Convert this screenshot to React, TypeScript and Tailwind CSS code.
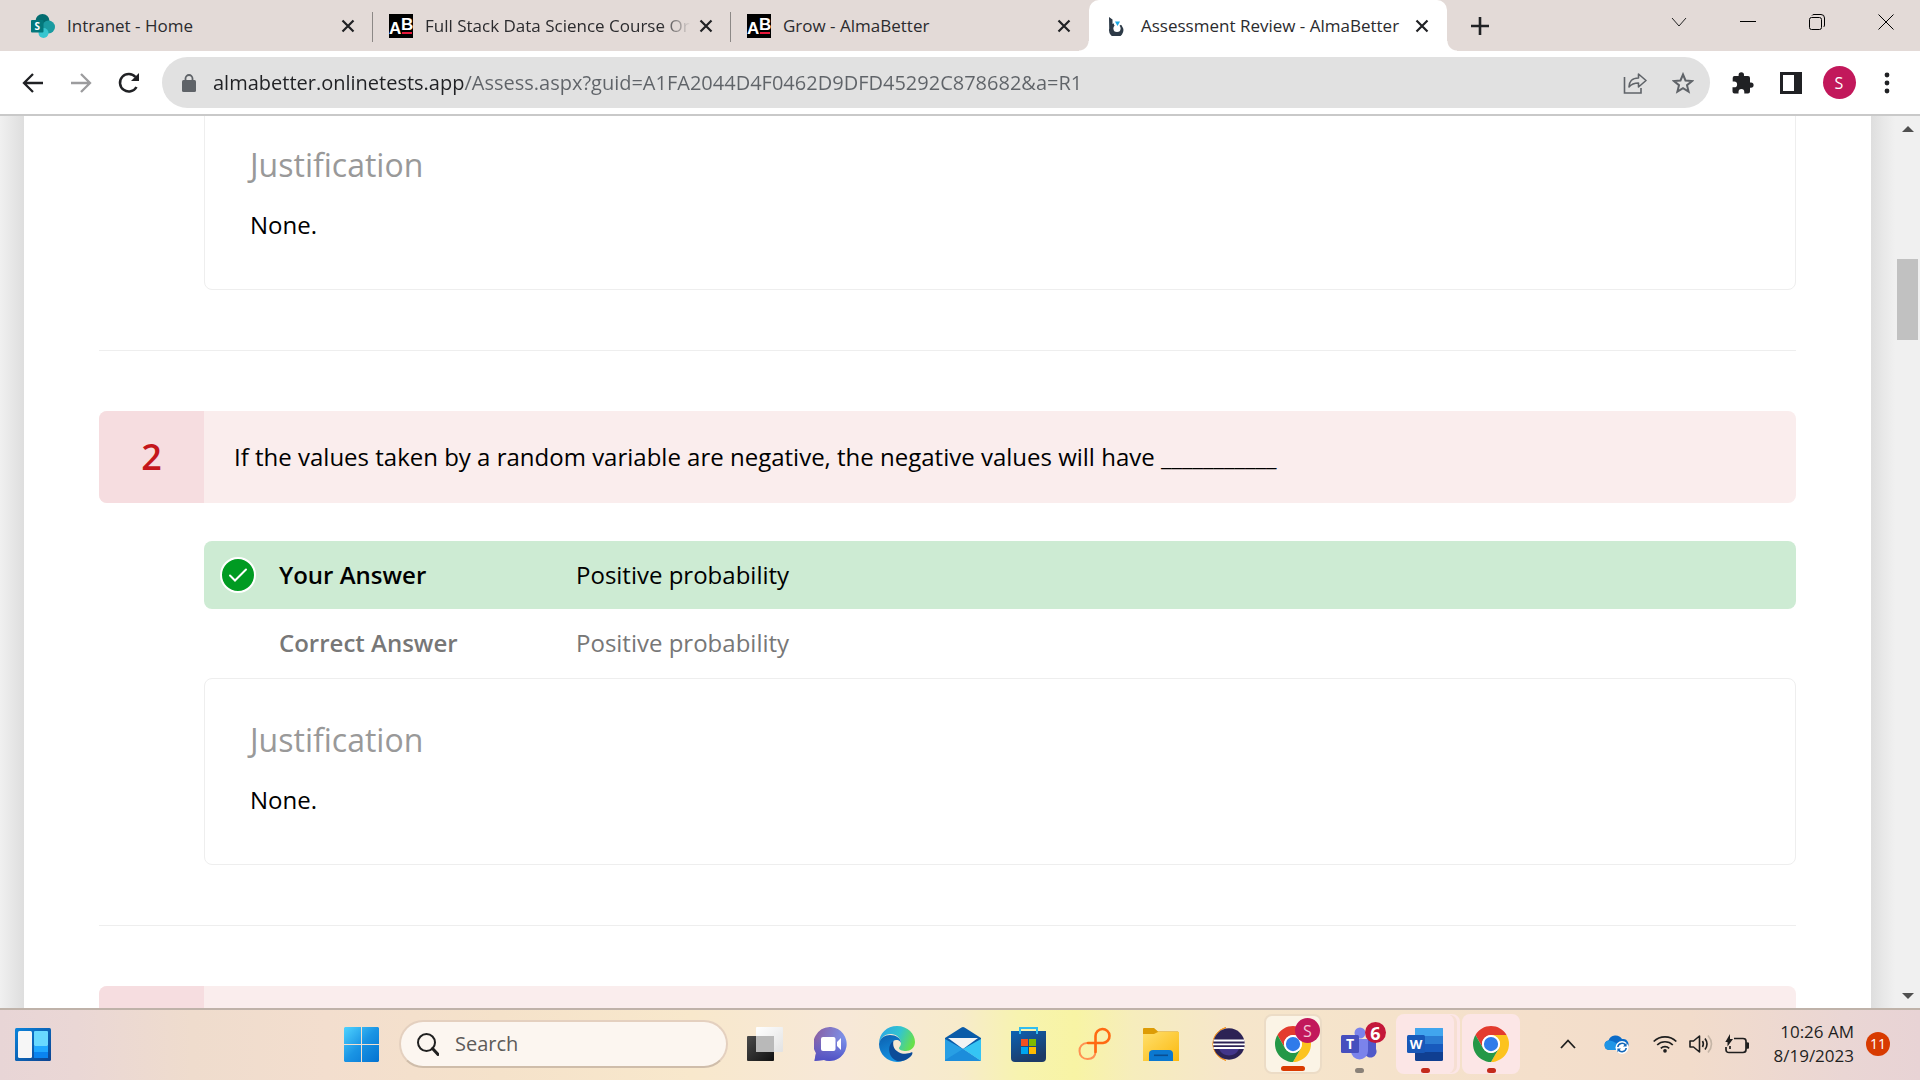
import React from "react";

const UI = "font-['Open_Sans','Noto_Sans',sans-serif]";

/* ---------- Tab icons ---------- */

function SharePointIcon() {
  return (
    <svg width="24" height="24" viewBox="0 0 24 24" aria-hidden="true">
      <circle cx="11.5" cy="7" r="7" fill="#036c70" />
      <circle cx="17.5" cy="13" r="6.5" fill="#1a9ba1" />
      <circle cx="12.5" cy="19" r="5" fill="#37c6d0" />
      <rect x="0" y="6" width="12.5" height="12.5" rx="1" fill="#03787c" />
      <text x="6.2" y="16" fontSize="10" fontWeight="700" fill="#fff" textAnchor="middle" fontFamily="Open Sans">S</text>
    </svg>
  );
}

function AlmaIcon() {
  return (
    <svg width="24" height="24" viewBox="0 0 24 24" aria-hidden="true">
      <rect width="24" height="24" fill="#000" />
      <text x="0" y="20" fontSize="17" fontWeight="700" fill="#fff" fontFamily="Liberation Sans">A</text>
      <text x="12" y="16" fontSize="17" fontWeight="700" fill="#fff" fontFamily="Liberation Sans">B</text>
      <rect x="13" y="18" width="10" height="2" fill="#e8173a" />
    </svg>
  );
}

function AssessIcon() {
  return (
    <svg width="18" height="20" viewBox="0 0 18 20" aria-hidden="true">
      <path d="M1 1 L4.500 3.500 V8 A7.200 7.200 0 1 1 1.200 12.500Z" fill="#2d3a47" />
      <circle cx="9" cy="12.500" r="3.600" fill="#fff" />
      <path d="M6 5 H13 V8.500 L9 12 L6 9Z" fill="#fff" />
      <path d="M7 5.500 H12 L9.500 10Z" fill="#19a9e5" />
    </svg>
  );
}

function CloseGlyph() {
  return (
    <svg width="14" height="14" viewBox="0 0 14 14" aria-hidden="true">
      <path d="M1.500 1.500 L12.500 12.500 M12.500 1.500 L1.500 12.500" stroke="#202124" strokeWidth="2.200" />
    </svg>
  );
}

type TabProps = { icon: React.ReactNode; title: string; active?: boolean; divider?: boolean; fade?: boolean };

function Tab({ icon, title, active, divider, fade }: TabProps) {
  return (
    <div className="relative flex w-[358px] min-w-0 shrink items-center pl-4 pr-[18px]">
      {active && (
        <>
          <span className="absolute inset-0 rounded-t-[10px] bg-white" />
          <span className="absolute -left-[10px] bottom-0 size-[10px] bg-[radial-gradient(circle_at_0_0,#e3dad7_9px,white_10px)]" />
          <span className="absolute -right-[10px] bottom-0 size-[10px] bg-[radial-gradient(circle_at_100%_0,#e3dad7_9px,white_10px)]" />
        </>
      )}
      <button
        role="tab"
        aria-selected={!!active}
        className={`relative flex min-w-0 flex-1 items-center gap-3 overflow-hidden whitespace-nowrap text-left text-[17px] leading-6 text-[#2b2b2e] ${
          fade ? "[mask-image:linear-gradient(to_right,black_90%,transparent_100%)]" : ""
        }`}
      >
        <span className="flex w-6 shrink-0 justify-center">{icon}</span>
        <span>{title}</span>
      </button>
      <button aria-label={`Close ${title}`} className={`relative ${fade ? "ml-2" : "ml-3"}`}>
        <CloseGlyph />
      </button>
      {divider && <span className="absolute right-0 top-3 h-[30px] w-px bg-[#8c8886]" />}
    </div>
  );
}

function TabStrip() {
  return (
    <header className="flex h-[51px] shrink-0 bg-[#e3dad7] pl-[15px]">
      <div role="tablist" className="flex min-w-0">
        <Tab icon={<SharePointIcon />} title="Intranet - Home" divider />
        <Tab icon={<AlmaIcon />} title="Full Stack Data Science Course Or" divider fade />
        <Tab icon={<AlmaIcon />} title="Grow - AlmaBetter" />
        <Tab icon={<AssessIcon />} title="Assessment Review - AlmaBetter" active />
      </div>
      <button aria-label="New tab" className="ml-6">
        <svg width="18" height="18" viewBox="0 0 18 18" aria-hidden="true">
          <path d="M9 0 V18 M0 9 H18" stroke="#202124" strokeWidth="2.600" />
        </svg>
      </button>
      <div className="ml-auto flex h-11">
        <button aria-label="Search tabs" className="flex w-[69px] items-center justify-center">
          <svg width="16" height="10" viewBox="0 0 16 10" aria-hidden="true"><path d="M1 1 L8 9 L15 1" fill="none" stroke="#222" /></svg>
        </button>
        <button aria-label="Minimize" className="flex w-[69px] items-center justify-center">
          <svg width="16" height="2" viewBox="0 0 16 2" aria-hidden="true"><rect width="16" height="1" fill="#000" /></svg>
        </button>
        <button aria-label="Restore" className="flex w-[69px] items-center justify-center">
          <svg width="16" height="16" viewBox="0 0 16 16" fill="none" stroke="#000" aria-hidden="true">
            <rect x=".5" y="3.500" width="12" height="12" rx="2" />
            <path d="M3 1.500 Q3.500 .5 5 .5 H12 Q15.500 .5 15.500 4 V11 Q15.500 12.500 14.500 13" />
          </svg>
        </button>
        <button aria-label="Close window" className="flex w-[69px] items-center justify-center">
          <svg width="16" height="16" viewBox="0 0 16 16" aria-hidden="true"><path d="M.5 .5 L15.500 15.500 M15.500 .5 L.5 15.500" stroke="#000" /></svg>
        </button>
      </div>
    </header>
  );
}

/* ---------- Toolbar ---------- */

function Toolbar() {
  return (
    <div className="flex h-[65px] shrink-0 items-center border-b-2 border-[#c9c9c9] bg-white px-[9px]">
      <button aria-label="Back" className="flex w-12 justify-center">
        <svg width="22" height="22" viewBox="0 0 22 22" fill="none" stroke="#202124" strokeWidth="2.300" aria-hidden="true">
          <path d="M21 11 H2.500 M11 2 L2 11 L11 20" />
        </svg>
      </button>
      <button aria-label="Forward" className="flex w-12 justify-center">
        <svg width="22" height="22" viewBox="0 0 22 22" fill="none" stroke="#9c9c9e" strokeWidth="2.300" aria-hidden="true">
          <path d="M1 11 H19.500 M11 2 L20 11 L11 20" />
        </svg>
      </button>
      <button aria-label="Reload" className="flex w-12 justify-center">
        <svg width="22" height="22" viewBox="0 0 22 22" aria-hidden="true">
          <path d="M18.500 15 A8.800 8.800 0 1 1 17.500 5" fill="none" stroke="#202124" strokeWidth="2.500" />
          <path d="M21 1 V9 H13 Z" fill="#202124" />
        </svg>
      </button>
      <div className="ml-[9px] flex h-[51px] min-w-0 flex-1 items-center rounded-full bg-[#e1e1e1] pl-5 pr-[3px]">
        <svg width="14" height="18" viewBox="0 0 14 18" aria-hidden="true">
          <rect x="0" y="6" width="14" height="12" rx="1.500" fill="#5f6368" />
          <path d="M3.500 7 V4.500 A3.500 3.500 0 0 1 10.500 4.500 V7" fill="none" stroke="#5f6368" strokeWidth="1.800" />
        </svg>
        <input
          aria-label="Address"
          defaultValue="almabetter.onlinetests.app/Assess.aspx?guid=A1FA2044D4F0462D9DFD45292C878682&a=R1"
          className="ml-[17px] min-w-0 flex-1 bg-[linear-gradient(to_right,#202124_251px,#5f6368_251px)] bg-clip-text text-xl leading-8 text-transparent outline-none"
        />
        <button aria-label="Share" className="flex w-12 justify-center">
          <svg width="24" height="22" viewBox="0 0 24 22" fill="none" stroke="#5f6368" strokeWidth="1.600" aria-hidden="true">
            <path d="M1.500 5 V21 H18 V16" />
            <path d="M6 15 C6 10 9 6 15.500 6 V2 L23 8.500 L15.500 15 V11 C11 11 8.500 12 6 15Z" strokeLinejoin="round" />
          </svg>
        </button>
        <button aria-label="Bookmark" className="flex w-12 justify-center">
          <svg width="22" height="22" viewBox="0 0 22 22" aria-hidden="true">
            <path d="M11 2.500 L13.500 8.500 L20 9 L15 13.200 L16.600 19.600 L11 16.100 L5.400 19.600 L7 13.200 L2 9 L8.500 8.500Z" fill="none" stroke="#5f6368" strokeWidth="2" />
          </svg>
        </button>
      </div>
      <button aria-label="Extensions" className="ml-[9px] flex w-12 justify-center">
        <svg width="22" height="22" viewBox="0 0 22 22" aria-hidden="true">
          <path fill="#202124" d="M19 10.500 H18 V6 Q18 4 16 4 H12 V3 A2.700 2.700 0 0 0 6.600 3 V4 H2.500 Q.7 4 .7 6 V9.500 H2.200 A2.900 2.900 0 0 1 2.200 15.300 H.5 V19.500 Q.5 21.500 2.500 21.500 H6.500 V20 A2.900 2.900 0 0 1 12.300 20 V21.500 H16 Q18 21.500 18 19.500 V15.700 H19 A2.600 2.600 0 0 0 19 10.500Z" />
        </svg>
      </button>
      <button aria-label="Side panel" className="flex w-12 justify-center">
        <svg width="22" height="22" viewBox="0 0 22 22" aria-hidden="true">
          <path fillRule="evenodd" fill="#202124" d="M0 0 H22 V22 H0Z M3 3 V19 H14 V3Z" />
        </svg>
      </button>
      <button aria-label="Profile" className="flex w-12 justify-center">
        <span className="flex size-[33px] items-center justify-center rounded-full bg-[#c2185b] text-base text-white">S</span>
      </button>
      <button aria-label="Menu" className="flex w-12 justify-center">
        <svg width="6" height="22" viewBox="0 0 6 22" fill="#202124" aria-hidden="true">
          <circle cx="3" cy="3" r="2.400" /><circle cx="3" cy="11" r="2.400" /><circle cx="3" cy="19" r="2.400" />
        </svg>
      </button>
    </div>
  );
}

/* ---------- Assessment page ---------- */

function Justification() {
  return (
    <section className="ml-[105px] h-[187px] rounded-lg border border-[#eee] pl-[45px] pt-[39px]">
      <h3 className="text-[32px] leading-[44px] text-[#999]">Justification</h3>
      <p className="mt-5 text-2xl leading-9 text-black">None.</p>
    </section>
  );
}

function Question({ number, children }: { number?: string; children?: React.ReactNode }) {
  return (
    <div className="flex h-[92px] overflow-hidden rounded-lg bg-[#faeded]">
      <div className="flex w-[105px] shrink-0 items-center justify-center bg-[#f6dde0] text-4xl font-semibold text-[#c4161c]">{number}</div>
      <h2 className="flex items-center pl-[30px] text-2xl text-black">{children}</h2>
    </div>
  );
}

function Page() {
  return (
    <main className="flex min-h-0 flex-1 overflow-hidden bg-[#f0f0f0]">
      <div className="w-6 shrink-0 bg-linear-to-r from-[#f0f0f0] to-[#dedede]" />
      <div className="min-w-0 flex-1 bg-white px-[75px]">
        <div className="-mt-[13px]">
          <Justification />
        </div>
        <hr className="my-[60px] border-[#eee]" />
        <Question number="2">If the values taken by a random variable are negative, the negative values will have ___________</Question>
        <dl className="ml-[105px] mt-[38px] text-2xl">
          <div className="flex h-[68px] items-center rounded-lg bg-[#cdebd3] text-black">
            <div className="flex w-[75px] pl-4">
              <svg width="36" height="36" viewBox="0 0 36 36" role="img" aria-label="Correct">
                <circle cx="18" cy="18" r="17" fill="#009b22" stroke="#fff" strokeWidth="2" />
                <path d="M10 18.500 L15 23.500 L26 12.500" fill="none" stroke="#fff" strokeWidth="2" strokeLinecap="round" />
              </svg>
            </div>
            <dt className="w-[297px] font-semibold">Your Answer</dt>
            <dd>Positive probability</dd>
          </div>
          <div className="mb-px flex h-[68px] items-center pl-[75px] text-[#777]">
            <dt className="w-[297px] font-semibold">Correct Answer</dt>
            <dd>Positive probability</dd>
          </div>
        </dl>
        <Justification />
        <hr className="my-[60px] border-[#eee]" />
        <Question />
      </div>
      <div className="w-6 shrink-0 bg-linear-to-r from-[#dedede] via-[#e8e8e8] to-[#f0f0f0]" />
      <div className="flex w-[25px] shrink-0 flex-col items-center pb-[9px] pt-[10px]">
        <svg width="12" height="6" viewBox="0 0 12 6" aria-hidden="true"><path d="M0 6 L6 0 L12 6Z" fill="#505050" /></svg>
        <div className="flex w-full flex-1 flex-col items-center pt-[127px]">
          <div className="h-[81px] w-[21px] bg-[#c1c1c1]" />
        </div>
        <svg width="12" height="6" viewBox="0 0 12 6" aria-hidden="true"><path d="M0 0 L6 6 L12 0Z" fill="#505050" /></svg>
      </div>
    </main>
  );
}

/* ---------- Taskbar icons ---------- */

function WidgetsIcon() {
  return (
    <svg width="36" height="33" viewBox="0 0 36 33" aria-hidden="true">
      <defs>
        <linearGradient id="wg" x1="0" y1="0" x2="1" y2="1"><stop stopColor="#0a84dc" /><stop offset="1" stopColor="#0d4390" /></linearGradient>
      </defs>
      <rect width="36" height="33" rx="1.500" fill="url(#wg)" />
      <rect x="3" y="3" width="14" height="27" rx="1.500" fill="#f6f6f6" />
      <rect x="19" y="3" width="14" height="15" rx="1" fill="#68d9ff" />
      <rect x="19" y="18" width="14" height="6" fill="#1fa8ff" />
      <rect x="19" y="24" width="14" height="6" fill="#0a84f0" />
    </svg>
  );
}

function StartIcon() {
  return (
    <svg width="35" height="35" viewBox="0 0 35 35" aria-hidden="true">
      <defs>
        <linearGradient id="st" gradientUnits="userSpaceOnUse" x1="0" y1="0" x2="35" y2="35">
          <stop stopColor="#4fd3ff" /><stop offset=".5" stopColor="#1a94e4" /><stop offset="1" stopColor="#0472d0" />
        </linearGradient>
      </defs>
      <path fill="url(#st)" d="M1 0 H17 V17 H0 V1Z M18 0 H34 L35 1 V17 H18Z M0 18 H17 V35 H1 L0 34Z M18 18 H35 V34 L34 35 H18Z" />
    </svg>
  );
}

function TaskViewIcon() {
  return (
    <svg width="36" height="34" viewBox="0 0 36 34" aria-hidden="true">
      <defs>
        <linearGradient id="tv" x1="0" y1="0" x2="1" y2="1"><stop stopColor="#4a4a4a" /><stop offset="1" stopColor="#111" /></linearGradient>
        <linearGradient id="tw" x1="0" y1="0" x2="1" y2="1"><stop stopColor="#fff" /><stop offset="1" stopColor="#e2e2e2" /></linearGradient>
      </defs>
      <rect x="9" y="0" width="27" height="25" rx="1" fill="url(#tw)" />
      <rect x="0" y="9" width="27" height="25" rx="1" fill="url(#tv)" />
      <rect x="9" y="9" width="18" height="16" fill="#b9b9b9" />
    </svg>
  );
}

function ChatIcon() {
  return (
    <svg width="34" height="34" viewBox="0 0 34 34" aria-hidden="true">
      <defs>
        <linearGradient id="ch" x1="0" y1="0" x2="1" y2=".3"><stop stopColor="#8a5a9e" /><stop offset="1" stopColor="#7b95ee" /></linearGradient>
        <linearGradient id="ci" x1="0" y1="0" x2="0" y2="1"><stop offset=".3" stopColor="#5558c8" stopOpacity="0" /><stop offset="1" stopColor="#5050c4" /></linearGradient>
      </defs>
      <path d="M17 0 A17 17 0 1 1 10 33 Q5 33.500 .5 34 Q1 30 2 26 A17 17 0 0 1 17 0Z" fill="url(#ch)" />
      <path d="M17 0 A17 17 0 1 1 10 33 Q5 33.500 .5 34 Q1 30 2 26 A17 17 0 0 1 17 0Z" fill="url(#ci)" />
      <rect x="7" y="10" width="14.500" height="14" rx="2" fill="#fff" />
      <path d="M23 15 L27 11 V23 L23 19Z" fill="#fff" />
    </svg>
  );
}

function EdgeIcon() {
  return (
    <svg width="36" height="36" viewBox="0 0 36 36" aria-hidden="true">
      <defs>
        <linearGradient id="e1" x1="0" y1=".2" x2="1" y2=".5"><stop stopColor="#2ba5e6" /><stop offset=".55" stopColor="#33c5cf" /><stop offset="1" stopColor="#68e04a" /></linearGradient>
        <linearGradient id="e2" x1="0" y1="0" x2=".4" y2="1"><stop stopColor="#0c5fae" /><stop offset="1" stopColor="#1492e2" /></linearGradient>
      </defs>
      <path d="M0 18 C0 7 8 0 18 0 C29 0 36 8 36 16 C36 22 31 25 27 25 C23 25 20 24 20 22 C20 21 22 20 22 17 C22 12 17 8 12 8 C5 8 1 13 0 18Z" fill="url(#e1)" />
      <path d="M0 18 C1 12 6 9 11 9 C17 9 22 12 22 17 C21 14.500 19 14 17 14 C14 14 13 17 13 20 C13 27 19 34 26 34 C14 40 0 31 0 18Z" fill="url(#e2)" />
      <path d="M14.500 15 C8 19 9 30 16 34 C22 38 33 32 33.500 27 C33.500 26 33 26 32.500 26.300 C24 30.500 12 25 14.500 15Z" fill="#0c4c98" />
    </svg>
  );
}

function MailIcon() {
  return (
    <svg width="36" height="34" viewBox="0 0 36 34" aria-hidden="true">
      <path d="M0 11 L16.500 .5 Q18 -.4 19.500 .5 L36 11 V22 H0Z" fill="#0a5ba8" />
      <path d="M3 11 H33 L18 22Z" fill="#f4f4f4" />
      <path d="M0 12 L18 22 L36 34 H0Z" fill="#289fe4" />
      <path d="M18 22 L36 12 V34Z" fill="#35c4f4" />
      <path d="M0 33 L18 22 L36 34 H0Z" fill="#1c8ddb" />
    </svg>
  );
}

function StoreIcon() {
  return (
    <svg width="36" height="36" viewBox="0 0 36 36" aria-hidden="true">
      <defs><linearGradient id="so" x1="0" y1="0" x2=".5" y2="1"><stop stopColor="#0b62b4" /><stop offset="1" stopColor="#1d3a66" /></linearGradient></defs>
      <path d="M0 5 H35 V32 Q35 36 31 36 H4 Q0 36 0 32Z" fill="url(#so)" />
      <path d="M9 8 V2 H26 V8" fill="none" stroke="#30bdf0" strokeWidth="2" />
      <rect x="10" y="13" width="7" height="7" fill="#f25022" /><rect x="18" y="13" width="7" height="7" fill="#7fba00" />
      <rect x="10" y="21" width="7" height="7" fill="#00a4ef" /><rect x="18" y="21" width="7" height="7" fill="#ffb900" />
    </svg>
  );
}

function LoopIcon() {
  return (
    <svg width="34" height="34" viewBox="0 0 34 34" fill="none" strokeLinecap="round" aria-hidden="true">
      <path d="M17.500 16 H9 A7.500 7.500 0 0 0 1.500 24 C1.500 29 5 32 9.500 32 C14.500 32 17.500 29 17.500 24Z" stroke="#ff9152" strokeWidth="2" />
      <path d="M17.500 25 V9 A7 7 0 1 1 25 16 H10" stroke="#ff6a13" strokeWidth="2.600" />
    </svg>
  );
}

function ExplorerIcon() {
  return (
    <svg width="36" height="33" viewBox="0 0 36 33" aria-hidden="true">
      <defs><linearGradient id="fo" x1="0" y1="0" x2="1" y2="1"><stop stopColor="#ffdf6c" /><stop offset="1" stopColor="#fbb90f" /></linearGradient></defs>
      <path d="M0 1 Q0 0 1 0 H11 L15 3.500 H35 L36 5 V12 H0Z" fill="#dd9c06" />
      <path d="M0 6 H11 L15 4 H36 V33 H0Z" fill="url(#fo)" />
      <path d="M6 33 V26 Q6 22 10 22 H26 Q30 22 30 26 V33Z" fill="#0b78d0" />
      <rect x="11" y="26.500" width="14" height="1.600" fill="#0a4e92" />
    </svg>
  );
}

function EclipseIcon() {
  return (
    <svg width="36" height="34" viewBox="0 0 36 34" aria-hidden="true">
      <path d="M17 .5 A17 17 0 0 0 17 33.500 C8 29 4 24 4 17 C4 9 9 3 17 .5Z" fill="#f7941e" stroke="#f7941e" />
      <circle cx="20" cy="17" r="15.700" fill="#2c2255" />
      <path d="M10 22 H30 A11 11 0 0 1 10 22Z" fill="#43368a" />
      <path d="M4.500 13.500 H35.500 M4 17.300 H36 M4.500 21 H35.500" stroke="#fff" strokeWidth="1.800" />
    </svg>
  );
}

function ChromeIcon() {
  return (
    <svg width="36" height="36" viewBox="0 0 48 48" aria-hidden="true">
      <path d="M24 12 H44.780 A24 24 0 0 0 3.220 12 L13.610 30 A12 12 0 0 1 24 12Z" fill="#e33b2e" />
      <path d="M24 12 H44.780 A24 24 0 0 1 24 48 L34.390 30 A12 12 0 0 0 24 12Z" fill="#fcc31e" />
      <path d="M13.610 30 L3.220 12 A24 24 0 0 0 24 48 L34.390 30 A12 12 0 0 1 13.610 30Z" fill="#249847" />
      <circle cx="24" cy="24" r="12" fill="#fff" />
      <circle cx="24" cy="24" r="9.500" fill="#2f7bea" />
    </svg>
  );
}

function TeamsIcon() {
  return (
    <svg width="36" height="34" viewBox="0 0 36 34" aria-hidden="true">
      <circle cx="19" cy="6" r="5.500" fill="#7b83eb" />
      <circle cx="30" cy="8" r="4" fill="#5059c9" />
      <path d="M24 13 H35 V22 A6 6 0 0 1 24 27Z" fill="#5059c9" />
      <path d="M10 12 H27 V24 A8.500 8.500 0 0 1 10 24Z" fill="#7b83eb" />
      <rect x="0" y="8" width="18" height="18" rx="1.500" fill="#474fbe" />
      <text x="9" y="22" fontSize="14" fontWeight="700" fill="#fff" textAnchor="middle" fontFamily="Open Sans">T</text>
    </svg>
  );
}

function WordIcon() {
  return (
    <svg width="36" height="33" viewBox="0 0 36 33" aria-hidden="true">
      <rect x="8" y="0" width="28" height="33" rx="1.500" fill="#103f91" />
      <path d="M8 1 Q8 0 9 0 H35 Q36 0 36 1 V8 H8Z" fill="#41a5ee" />
      <rect x="8" y="8" width="28" height="8" fill="#2b7cd3" />
      <rect x="8" y="16" width="28" height="8" fill="#185abd" />
      <rect x="0" y="7" width="18" height="18" rx="1.500" fill="#1858b8" />
      <text x="9" y="21" fontSize="13" fontWeight="700" fill="#fff" textAnchor="middle" fontFamily="Open Sans">W</text>
    </svg>
  );
}

type AppProps = { label: string; children: React.ReactNode; tile?: string; badge?: React.ReactNode; mark?: string };

function TaskApp({ label, children, tile = "", badge, mark }: AppProps) {
  return (
    <div className="flex w-[66px] items-center justify-center">
      <button aria-label={label} className={`relative flex h-[60px] w-[58px] items-center justify-center rounded-lg ${tile}`}>
        {children}
        {badge}
        {mark && <span className={`absolute bottom-px h-[5px] rounded-full ${mark}`} />}
      </button>
    </div>
  );
}

function Taskbar() {
  return (
    <footer className="flex h-[72px] shrink-0 items-center border-t-2 border-[#bfb2a9] bg-[linear-gradient(to_right,#e8d5d6_0%,#ead7d5_4%,#efdccd_10%,#f3dece_17%,#f5e2ca_26%,#f8e8cc_36%,#f7e8d8_44%,#f7ebcb_50%,#f7f3b0_53%,#f8f4a4_56%,#f6edbc_59%,#f6e6cb_64%,#f4dfcb_80%,#f2dccb_88%,#ead6d4_96%,#e8d3d5_100%)] pb-0.5 text-[#1f1f1f]">
      <div className="flex min-w-0 flex-1 pl-[15px]">
        <button aria-label="Widgets"><WidgetsIcon /></button>
      </div>
      <div className="flex items-center">
        <button aria-label="Start" className="mr-5"><StartIcon /></button>
        <label className="mr-1 flex h-[48px] w-[329px] items-center rounded-full border-2 border-[#e4d0bf] border-b-[#cfbdaa] bg-[#fcf6f0] pl-4">
          <svg width="22" height="23" viewBox="0 0 22 23" fill="none" stroke="#202020" aria-hidden="true">
            <circle cx="9.500" cy="9.500" r="8.500" strokeWidth="2" />
            <path d="M15.500 15.500 L21 21.500" strokeWidth="3" strokeLinecap="round" />
          </svg>
          <input aria-label="Search" placeholder="Search" className="ml-4 min-w-0 flex-1 text-xl text-[#333] outline-none placeholder:text-[#5d5b59]" />
        </label>
        <TaskApp label="Task view"><TaskViewIcon /></TaskApp>
        <TaskApp label="Chat"><ChatIcon /></TaskApp>
        <TaskApp label="Edge"><EdgeIcon /></TaskApp>
        <TaskApp label="Mail"><MailIcon /></TaskApp>
        <TaskApp label="Store"><StoreIcon /></TaskApp>
        <TaskApp label="Loop"><LoopIcon /></TaskApp>
        <TaskApp label="File Explorer"><ExplorerIcon /></TaskApp>
        <TaskApp label="Eclipse"><EclipseIcon /></TaskApp>
        <TaskApp
          label="Chrome, profile S"
          tile="border-2 border-[#ecdcc6] bg-[#fbf4e6]"
          mark="w-6 bg-[#da3b01]"
          badge={<span className="absolute right-0 top-0.5 flex size-[25px] items-center justify-center rounded-full bg-[#c2185b] text-base leading-none text-[#f3c6d8]">S</span>}
        >
          <ChromeIcon />
        </TaskApp>
        <TaskApp
          label="Teams"
          mark="w-[9px] bg-[#8a8178]"
          badge={<span className="absolute right-0.5 top-2 flex size-[21px] items-center justify-center rounded-full bg-[#c4183a] text-lg font-bold leading-none text-white">6</span>}
        >
          <TeamsIcon />
        </TaskApp>
        <TaskApp label="Word" tile="bg-[#fce6e6] shadow-[4px_0_0_-1px_#f6dfd3,6px_0_0_#fce6e6]" mark="w-[9px] bg-[#c42b1c]"><WordIcon /></TaskApp>
        <TaskApp label="Chrome" tile="bg-[#fce6e6]" mark="w-[9px] bg-[#c42b1c]"><ChromeIcon /></TaskApp>
      </div>
      <div className="flex w-[396px] shrink-0 items-center justify-end pr-[30px]">
        <button aria-label="Hidden icons">
          <svg width="16" height="10" viewBox="0 0 16 10" aria-hidden="true"><path d="M1 9 L8 1.500 L15 9" fill="none" stroke="#1f1f1f" strokeWidth="1.800" /></svg>
        </button>
        <button aria-label="OneDrive" className="ml-7">
          <svg width="25" height="20" viewBox="0 0 25 20" aria-hidden="true">
            <path d="M5 16 A4.800 4.800 0 0 1 4.500 6.500 A7.500 7.500 0 0 1 18 5 A5.500 5.500 0 0 1 22 15 Q21 16 18 16Z" fill="#0b6bc8" />
            <path d="M5 16 A4.800 4.800 0 0 1 4.500 6.500 Q8 6 12 9 L18 13 V16Z" fill="#1f95e6" />
            <circle cx="18" cy="13.500" r="6.500" fill="#fff" />
            <path d="M13.800 13 A4.300 4.300 0 0 1 21.500 11 M22.200 14 A4.300 4.300 0 0 1 14.500 16" fill="none" stroke="#1467b8" strokeWidth="1.600" />
            <path d="M22.600 8.800 V12.400 H19Z M13.400 18.200 V14.600 H17Z" fill="#1467b8" />
          </svg>
        </button>
        <button aria-label="Network, volume and battery" className="ml-6 flex items-center gap-3">
          <svg width="24" height="18" viewBox="0 0 24 18" fill="none" stroke="#1f1f1f" strokeWidth="1.700" aria-hidden="true">
            <path d="M.7 6.500 A16 16 0 0 1 23.300 6.500 M4.200 10 A11 11 0 0 1 19.800 10 M7.800 13.300 A6 6 0 0 1 16.200 13.300" />
            <circle cx="12" cy="15.800" r="1" fill="#1f1f1f" />
          </svg>
          <svg width="24" height="20" viewBox="0 0 24 20" fill="none" stroke="#1f1f1f" strokeWidth="1.600" aria-hidden="true">
            <path d="M1 7 H4.500 L10.500 2 V18 L4.500 13 H1Z" strokeLinejoin="round" />
            <path d="M13.500 7 Q15.200 10 13.500 13 M16 4.500 Q20 10 16 15.500" />
            <path d="M19 1.500 Q26 10 19 18.500" stroke="#c5b5a6" />
          </svg>
          <svg width="24" height="20" viewBox="0 0 24 20" fill="none" stroke="#1f1f1f" strokeWidth="1.700" aria-hidden="true">
            <path d="M9 4.500 H18 Q21 4.500 21 7 V15.500 Q21 18.500 18 18.500 H4 Q1 18.500 1 15.500 V13" />
            <path d="M22 9 Q24 9 24 11.500 Q24 14 22 14Z" fill="#1f1f1f" />
            <path d="M5 0 V5 H8 L2.500 12.500 V8 H.3Z" fill="#1f1f1f" stroke="none" />
            <path d="M5 12 V15" />
          </svg>
        </button>
        <button aria-label="Clock" className="ml-6 text-right text-[17px] leading-6">
          <span className="block">10:26 AM</span>
          <span className="block">8/19/2023</span>
        </button>
        <button aria-label="11 notifications" className="ml-3 flex size-6 items-center justify-center rounded-full bg-[#d83b01] text-sm text-white">11</button>
      </div>
    </footer>
  );
}

export default function App() {
  return (
    <div className={`flex h-screen flex-col overflow-hidden ${UI}`}>
      <TabStrip />
      <Toolbar />
      <Page />
      <Taskbar />
    </div>
  );
}
